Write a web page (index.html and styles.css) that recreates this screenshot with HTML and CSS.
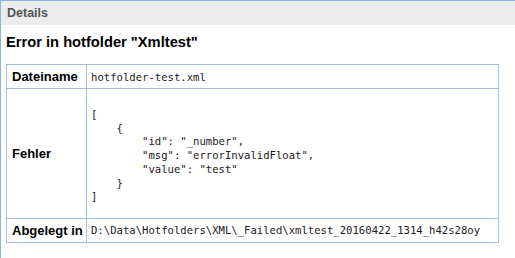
FILE: index.html
```html
<!DOCTYPE html>
<html>
<head>
<meta charset="utf-8">
<link rel="stylesheet" href="styles.css">
</head>
<body>
<div class="panel">
  <div class="panel-header">Details</div>
  <div class="panel-body">
    <h2 class="title">Error in hotfolder "Xmltest"</h2>
    <table class="details">
      <colgroup><col class="col-label"><col></colgroup>
      <tr class="row-short">
        <th>Dateiname</th>
        <td class="mono">hotfolder-test.xml</td>
      </tr>
      <tr>
        <th>Fehler</th>
        <td class="mono"><pre class="json">[
    {
        "id": "_number",
        "msg": "errorInvalidFloat",
        "value": "test"
    }
]</pre></td>
      </tr>
      <tr class="row-short">
        <th>Abgelegt in</th>
        <td class="mono">D:\Data\Hotfolders\XML\_Failed\xmltest_20160422_1314_h42s28oy</td>
      </tr>
    </table>
  </div>
</div>
</body>
</html>
```
FILE: styles.css
```css
html, body {
  margin: 0;
  padding: 0;
  background: #fff;
}
body {
  font-family: "Liberation Sans", Arial, sans-serif;
  color: #000;
}
.panel {
  border-top: 1px solid #8ab4e8;
  border-left: 1px solid #8ab4e8;
  box-sizing: border-box;
  height: 258px;
}
.panel-header {
  height: 24px;
  box-sizing: border-box;
  background: #ececec;
  color: #555;
  font-weight: bold;
  font-size: 12.5px;
  line-height: 24px;
  padding-left: 6px;
}
.panel-body {
  padding: 0 0 0 5px;
}
.title {
  margin: 0;
  padding-top: 9px;
  font-size: 14.7px;
  line-height: 17px;
  height: 30px;
  font-weight: bold;
}
.details {
  border-collapse: collapse;
  width: 493px;
  table-layout: fixed;
}
.col-label {
  width: 80px;
}
.details th, .details td {
  border: 1px solid #9fbde8;
  padding: 0;
}
.details th {
  text-align: left;
  padding-left: 5px;
  font-size: 13px;
  font-weight: bold;
  white-space: nowrap;
}
.details td {
  padding-left: 4px;
}
.row-short th, .row-short td {
  height: 23px;
}
.mono {
  font-family: "DejaVu Sans Mono", "Liberation Mono", monospace;
  font-size: 10.6px;
  color: #1a1a1a;
  white-space: nowrap;
}
.json {
  margin: 0;
  padding: 19px 0 14px;
  font-family: inherit;
  font-size: inherit;
  line-height: 13.7px;
}
```
